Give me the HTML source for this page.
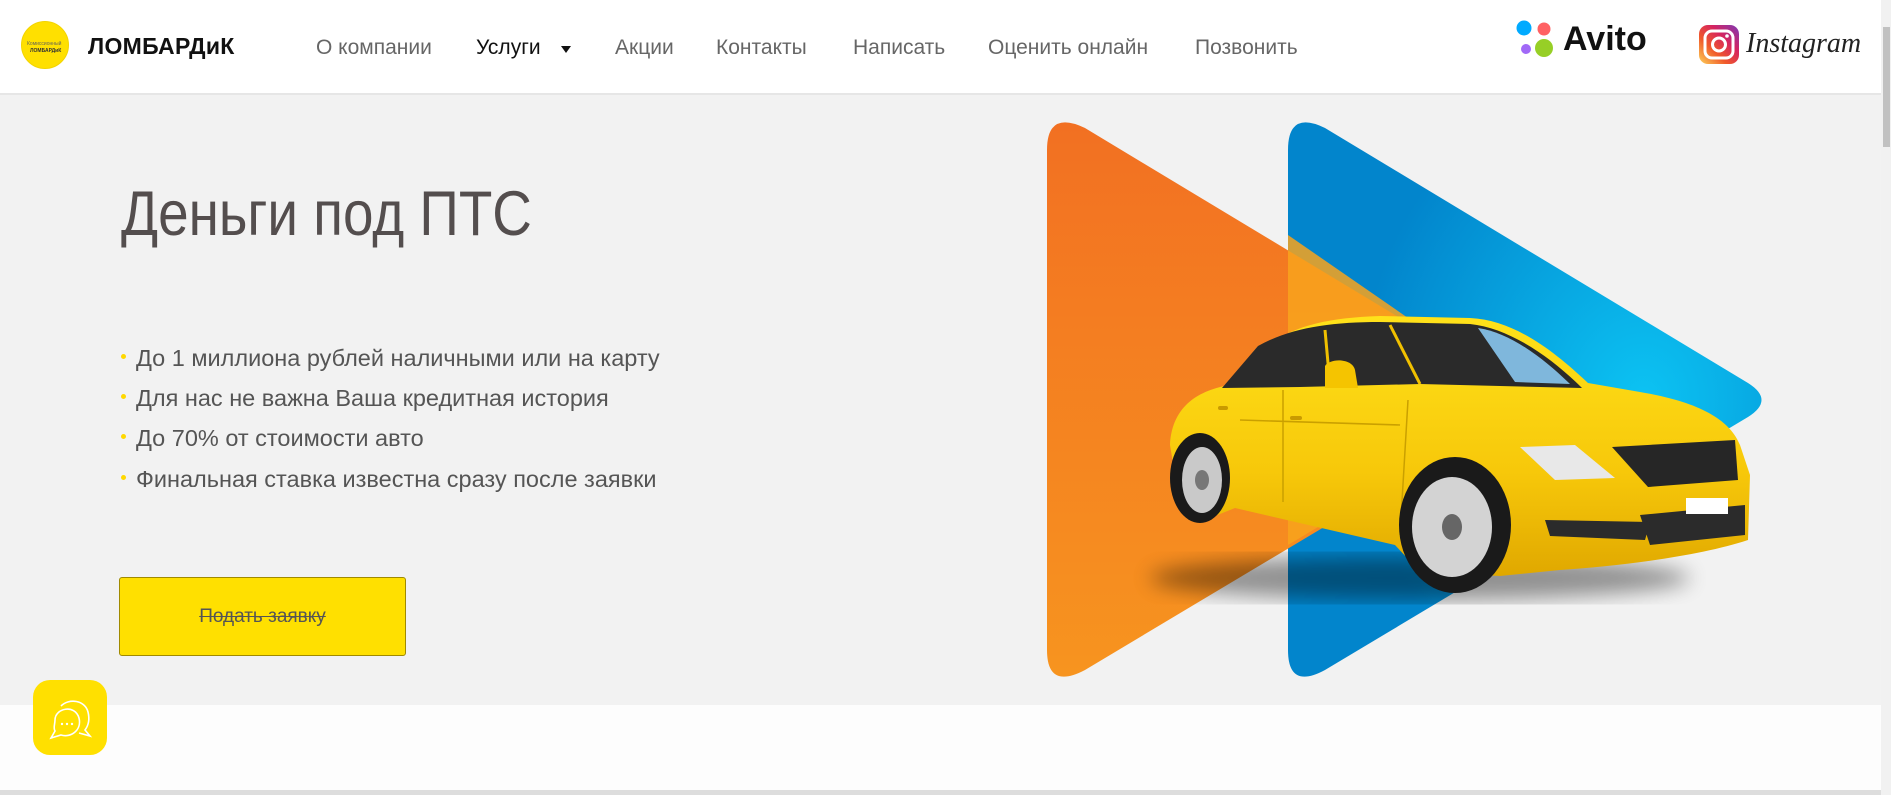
<!DOCTYPE html>
<html><head><meta charset="utf-8"><style>
*{margin:0;padding:0;box-sizing:border-box}
body{width:1891px;height:795px;overflow:hidden;background:#fdfdfd;font-family:"Liberation Sans",sans-serif;position:relative}
.hdr{position:absolute;left:0;top:0;width:1881px;height:95px;background:#fff;border-bottom:2px solid #e6e6e6}
.hero{position:absolute;left:0;top:95px;width:1881px;height:610px;background:#f2f2f2}
.nav{position:absolute;top:36px;font-size:21px;color:#666;white-space:nowrap}
.ttl{position:absolute;left:121px;top:178px;font-size:63px;color:#544e4e;transform:scaleX(0.87);transform-origin:left top;white-space:nowrap}
.li{position:absolute;left:121px;font-size:23.5px;color:#555;white-space:nowrap}
.li b{display:inline-block;width:5px;height:5px;border-radius:50%;background:#ffd800;margin-right:10px;vertical-align:middle;position:relative;top:-3px}
.btn{position:absolute;left:119px;top:577px;width:287px;height:79px;background:#ffe000;border:1px solid #a08a00;border-radius:3px;text-align:center;line-height:77px;font-size:19px;color:#555;text-decoration:line-through}
.chat{position:absolute;left:33px;top:680px;width:74px;height:75px;background:#ffe000;border-radius:17px}
.sb{position:absolute;left:1881px;top:0;width:10px;height:795px;background:#f1f1f1}
.sbt{position:absolute;left:1883px;top:27px;width:7px;height:120px;background:#c1c1c1}
</style></head><body>
<div class="hero"></div>
<div class="hdr">
  <div style="position:absolute;left:21px;top:21px;width:48px;height:48px;border-radius:50%;background:#ffe000;border:1px solid #f3d400"></div>
  <div style="position:absolute;left:27px;top:41px;font-size:5px;color:#665">Комиссионный</div>
  <div style="position:absolute;left:30px;top:48px;font-size:5px;font-weight:bold;color:#333">ЛОМБАРДиК</div>
  <div style="position:absolute;left:88px;top:33px;font-size:23px;font-weight:bold;color:#111;letter-spacing:0.3px">ЛОМБАРДиК</div>
  <div class="nav" style="left:316px">О компании</div>
  <div class="nav" style="left:476px;color:#111">Услуги</div>
  <div style="position:absolute;left:561px;top:46px;width:0;height:0;border-left:5px solid transparent;border-right:5px solid transparent;border-top:7px solid #111"></div>
  <div class="nav" style="left:615px">Акции</div>
  <div class="nav" style="left:716px">Контакты</div>
  <div class="nav" style="left:853px">Написать</div>
  <div class="nav" style="left:988px">Оценить онлайн</div>
  <div class="nav" style="left:1195px">Позвонить</div>
  <svg style="position:absolute;left:1515px;top:18px" width="40" height="42"><circle cx="9" cy="10" r="7.5" fill="#00aaff"/><circle cx="29" cy="11" r="6.5" fill="#ff6163"/><circle cx="11" cy="31" r="5" fill="#a169f7"/><circle cx="29" cy="30" r="9" fill="#97cf26"/></svg>
  <div style="position:absolute;left:1563px;top:20px;font-size:34px;font-weight:bold;color:#111">Avito</div>
  <svg style="position:absolute;left:1699px;top:25px" width="40" height="39"><defs><linearGradient id="ig" x1="0" y1="1" x2="1" y2="0"><stop offset="0" stop-color="#fdd25a"/><stop offset="0.35" stop-color="#f05a2a"/><stop offset="0.65" stop-color="#d6245f"/><stop offset="1" stop-color="#7c3ab8"/></linearGradient></defs><rect x="0" y="0" width="40" height="39" rx="9" fill="url(#ig)"/><rect x="6" y="6" width="28" height="27" rx="7" fill="none" stroke="#fff" stroke-width="3"/><circle cx="20" cy="19.5" r="6.5" fill="none" stroke="#fff" stroke-width="3"/><circle cx="28" cy="11" r="1.8" fill="#fff"/></svg>
  <div style="position:absolute;left:1746px;top:28px;font-size:28px;font-family:'Liberation Serif',serif;font-style:italic;color:#222">Instagram</div>
</div>
<div class="ttl">Деньги под ПТС</div>
<div class="li" style="top:345px"><b></b>До 1 миллиона рублей наличными или на карту</div>
<div class="li" style="top:385px"><b></b>Для нас не важна Ваша кредитная история</div>
<div class="li" style="top:425px"><b></b>До 70% от стоимости авто</div>
<div class="li" style="top:466px"><b></b>Финальная ставка известна сразу после заявки</div>
<div class="btn">Подать заявку</div>
<svg style="position:absolute;left:0;top:0" width="1891" height="795">
<defs>
<linearGradient id="og" x1="0" y1="0" x2="0" y2="1"><stop offset="0" stop-color="#f27022"/><stop offset="1" stop-color="#f7941f"/></linearGradient>
<radialGradient id="bg" cx="0.75" cy="0.5" r="0.6"><stop offset="0" stop-color="#0cc3f3"/><stop offset="1" stop-color="#0285cc"/></radialGradient>
<linearGradient id="cy" x1="0" y1="0" x2="0" y2="1"><stop offset="0" stop-color="#ffe21a"/><stop offset="0.6" stop-color="#f7c80a"/><stop offset="1" stop-color="#e0a800"/></linearGradient>
<filter id="bl"><feGaussianBlur stdDeviation="10"/></filter>
</defs>
<path d="M1288,150 Q1288,110 1325,128 L1748,383 Q1775,400 1748,417 L1325,670 Q1288,690 1288,650 Z" fill="url(#bg)"/>
<path d="M1047,150 Q1047,110 1085,128 L1508,383 Q1535,400 1508,417 L1085,670 Q1047,690 1047,650 Z" fill="url(#og)"/>
<path d="M1288,235 L1505,385 Q1528,400 1505,415 L1288,545 Z" fill="#f8a31c" opacity="0.85"/>
<ellipse cx="1420" cy="578" rx="270" ry="22" fill="#000" opacity="0.4" filter="url(#bl)"/>
<path d="M1170,445 C1172,405 1200,390 1230,385 L1255,356 C1285,328 1320,318 1380,316 L1470,318 C1515,320 1555,352 1588,383 L1640,392 C1700,402 1730,420 1740,445 L1750,475 L1748,540 C1700,556 1620,566 1560,570 L1500,576 L1420,572 L1395,545 L1235,508 L1210,518 L1180,505 Z" fill="url(#cy)"/>
<path d="M1222,388 L1258,346 C1290,328 1330,322 1380,322 L1470,324 C1510,328 1552,358 1582,388 L1420,384 L1300,387 Z" fill="#2a2a2a"/>
<path d="M1478,328 C1512,333 1545,360 1570,384 L1515,382 Z" fill="#7fb7dc"/>
<path d="M1325,330 L1330,385 M1390,325 L1420,384" stroke="#f0c000" stroke-width="3"/>
<path d="M1325,366 C1330,358 1352,358 1355,370 L1358,388 L1325,388 Z" fill="#f5c400"/>
<path d="M1240,420 L1400,425 M1283,390 L1283,502 M1408,400 L1400,535" stroke="#caa000" stroke-width="1.5" fill="none"/>
<rect x="1218" y="406" width="10" height="4" rx="2" fill="#c99a00"/><rect x="1290" y="416" width="12" height="4" rx="2" fill="#c99a00"/>
<ellipse cx="1200" cy="478" rx="30" ry="45" fill="#1a1a1a"/><ellipse cx="1202" cy="480" rx="20" ry="33" fill="#c9c9c9"/><ellipse cx="1202" cy="480" rx="7" ry="10" fill="#777"/>
<ellipse cx="1455" cy="525" rx="56" ry="68" fill="#1a1a1a"/><ellipse cx="1452" cy="527" rx="40" ry="50" fill="#d3d3d3"/><ellipse cx="1452" cy="527" rx="10" ry="13" fill="#666"/>
<path d="M1612,447 L1735,440 L1738,480 L1648,487 Z" fill="#262626"/>
<path d="M1520,447 L1575,445 L1615,478 L1555,480 Z" fill="#e8e8e8"/>
<path d="M1640,515 L1745,505 L1745,535 L1650,545 Z" fill="#2b2b2b"/>
<rect x="1686" y="498" width="42" height="16" fill="#fff"/>
<path d="M1545,520 L1650,522 L1645,540 L1550,536 Z" fill="#2b2b2b"/>
</svg>
<div class="chat"><svg width="74" height="75"><path d="M28,26 C36,18 52,20 55,32 C57,40 55,46 52,50 L57,56 L46,53 M38,24" stroke="#fff" stroke-width="1.6" fill="none"/><path d="M22,40 C22,28 42,24 46,38 C49,50 38,58 28,55 L18,58 L22,51 C20,48 22,44 22,40 Z" stroke="#fff" stroke-width="1.6" fill="none"/><circle cx="29" cy="44" r="1.2" fill="#fff"/><circle cx="34" cy="44" r="1.2" fill="#fff"/><circle cx="39" cy="44" r="1.2" fill="#fff"/></svg></div>
<div style="position:absolute;left:0;top:790px;width:1881px;height:5px;background:#ddd"></div>
<div class="sb"></div><div class="sbt"></div>
</body></html>
